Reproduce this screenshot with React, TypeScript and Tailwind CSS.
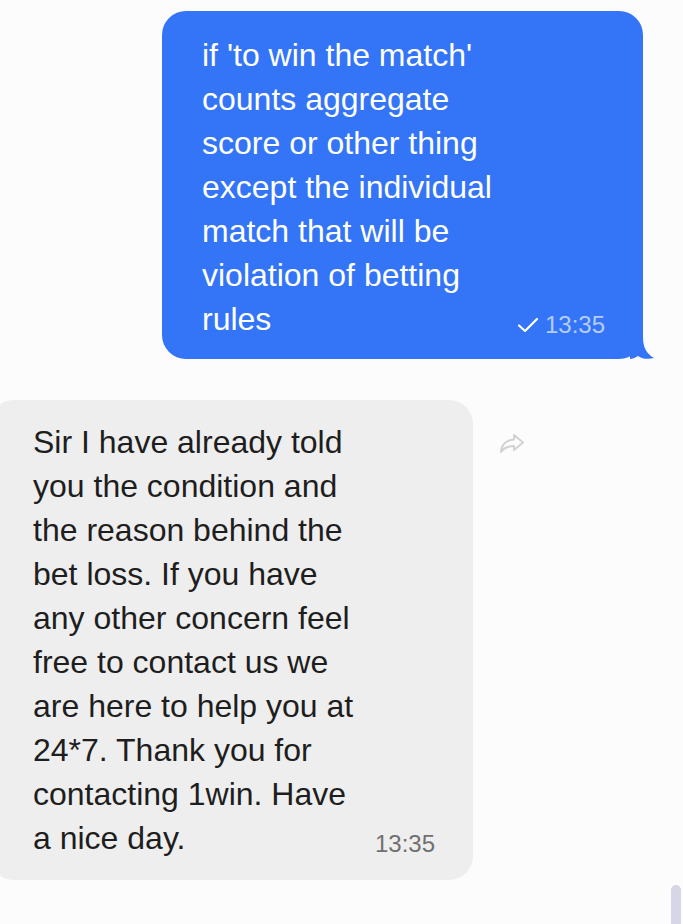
import React from "react";

export default function App() {
  const font = { fontFamily: '"Liberation Sans", Arial, sans-serif' };
  return (
    <div className="relative min-h-[924px] w-full overflow-hidden bg-[#fcfcfc]" style={font}>
      <div className="flex flex-col pt-[11px]">
        {/* outgoing */}
        <div className="relative ml-[162px] mr-[40px] rounded-[24px] bg-[#3375f6] pl-[40px] pr-[38px] pt-[22px] pb-[18px] text-[32px] leading-[44px] text-white">
          <div>
            if 'to win the match'
            <br />
            counts aggregate
            <br />
            score or other thing
            <br />
            except the individual
            <br />
            match that will be
            <br />
            violation of betting
          </div>
          <div className="flex items-end justify-between">
            <span>rules</span>
            <span className="flex items-center gap-[6px] pb-[1px] text-[24px] leading-[30px] text-[#b4cdfb]">
              <svg width="22" height="16" viewBox="0 0 22 16" fill="none">
                <path d="M2 8.5 L8 14 L20 2" stroke="white" strokeWidth="2.2" strokeLinecap="round" strokeLinejoin="round" />
              </svg>
              13:35
            </span>
          </div>
          <svg className="absolute bottom-0 right-[-12px]" width="25" height="40" viewBox="0 0 25 40">
            <path d="M0 0 H13 V18 C13 29 17 35 24 39 C19 40.5 12 40 8 37 C5 39 2 40 0 40 Z" fill="#3375f6" />
          </svg>
        </div>

        {/* incoming */}
        <div className="mt-[41px] flex items-start">
          <div className="relative ml-[-10px] w-[483px] rounded-[24px] bg-[#eeeeee] pl-[43px] pr-[38px] pt-[20px] pb-[20px] text-[32px] leading-[44px] text-[#1e1e1e]">
            <div>
              Sir I have already told
              <br />
              you the condition and
              <br />
              the reason behind the
              <br />
              bet loss. If you have
              <br />
              any other concern feel
              <br />
              free to contact us we
              <br />
              are here to help you at
              <br />
              24*7. Thank you for
              <br />
              contacting 1win. Have
            </div>
            <div className="flex items-end justify-between">
              <span>a nice day.</span>
              <span className="pb-[1px] text-[24px] leading-[30px] text-[#707070]">13:35</span>
            </div>
          </div>
          <div className="ml-[26px] mt-[32px] text-[#d2d2d2]">
            <svg width="26" height="22" viewBox="0 0 26 22" fill="none">
              <path
                d="M15 3 L24 10.5 L15 18 V14 C9 14 5 16 2 20 C2.5 13 7 8 15 7.5 Z"
                stroke="currentColor"
                strokeWidth="2"
                strokeLinejoin="round"
              />
            </svg>
          </div>
        </div>
      </div>
      <div className="absolute bottom-0 right-[2px] h-[39px] w-[10px] rounded-t-[5px] bg-[#d6d6e6]" />
    </div>
  );
}
